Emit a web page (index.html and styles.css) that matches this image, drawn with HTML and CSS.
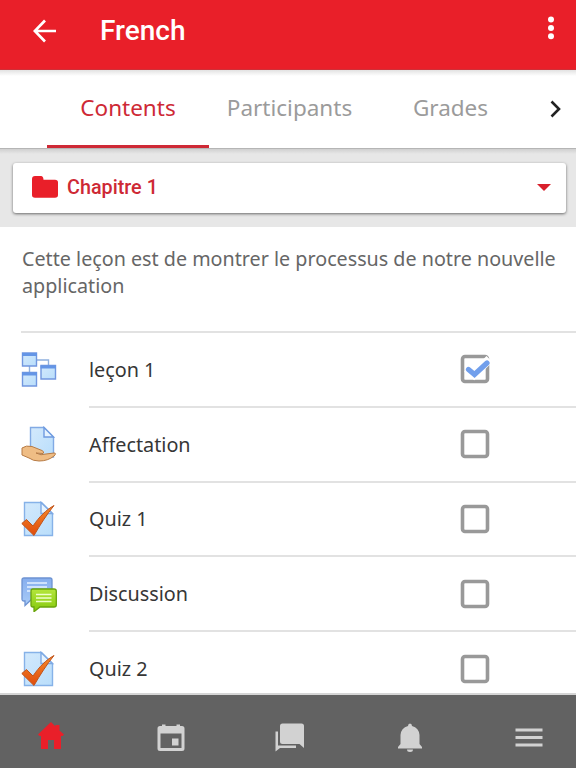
FILE: index.html
```html
<!DOCTYPE html>
<html lang="fr">
<head>
    <meta charset="UTF-8">
    <meta name="viewport" content="width=device-width, initial-scale=1.0">
    <title>French</title>
    <link rel="stylesheet" href="styles.css">
</head>
<body>
    <!-- Shared gradients and activity icons -->
    <svg class="defs" width="0" height="0">
        <defs>
            <linearGradient id="paper" x1="0" y1="0" x2="1" y2="1">
                <stop offset="0" stop-color="#d3e9fc"/>
                <stop offset="1" stop-color="#b9defb"/>
            </linearGradient>
            <linearGradient id="tick" x1="0" y1="0" x2="0" y2="1">
                <stop offset="0" stop-color="#f58a2c"/>
                <stop offset="1" stop-color="#e04c0c"/>
            </linearGradient>
            <linearGradient id="green" x1="0" y1="0" x2="0" y2="1">
                <stop offset="0" stop-color="#b4e63c"/>
                <stop offset="1" stop-color="#84c80c"/>
            </linearGradient>
            <linearGradient id="blue" x1="0" y1="0" x2="0" y2="1">
                <stop offset="0" stop-color="#86aeee"/>
                <stop offset="1" stop-color="#a9ccf8"/>
            </linearGradient>
        </defs>
        <symbol id="quiz" viewBox="0 0 36 36">
            <path d="M3.5 1.5H20.500L31.500 12.500V34.500H3.500Z" fill="url(#paper)" stroke="#86b2e8" stroke-width="1.400"/>
            <path d="M20 1.500V12.500H31.500Z" fill="#e6f3fe" stroke="#7da9e4" stroke-width="1.400"/>
            <path d="M.8 22.500L5.500 18.500L12 25C18 16 25 9 33 4.500C26 13 19 24 13 34.500Z" fill="url(#tick)" stroke="#c0541c"/>
        </symbol>
        <symbol id="empty" viewBox="0 0 30 30">
            <rect x="2.500" y="2.500" width="25" height="25" rx="2.500" fill="#fff" stroke="#999" stroke-width="3.600"/>
        </symbol>
    </svg>

    <header class="header">
        <svg class="back" width="24" height="24" viewBox="0 0 24 24"><path d="M23 12H2M12 1.500L1.800 12L12 22.500" fill="none" stroke="#fff" stroke-width="2.700"/></svg>
        <h1 class="title">French</h1>
        <svg class="more" width="8" height="26" viewBox="0 0 8 26" fill="#fff"><circle cx="4" cy="4.500" r="3"/><circle cx="4" cy="13" r="3"/><circle cx="4" cy="21.300" r="3"/></svg>
    </header>

    <nav class="tabs">
        <a class="tab active">Contents</a>
        <a class="tab">Participants</a>
        <a class="tab">Grades</a>
        <svg class="next" width="12" height="18" viewBox="0 0 12 18"><path d="M1.500 1.500L9 9L1.500 16.500" fill="none" stroke="#222" stroke-width="2.600"/></svg>
    </nav>

    <div class="chapter-bar">
        <div class="chapter">
            <svg width="26" height="22" viewBox="0 0 26 22"><path d="M3 0H9Q11.300 0 11.500 3.700H23Q26 3.700 26 6.500V19Q26 21.700 23 21.700H3Q0 21.700 0 19V3Q0 0 3 0Z" fill="#e91f29"/></svg>
            <span class="chapter-name">Chapitre 1</span>
            <span class="caret"></span>
        </div>
    </div>

    <main class="content">
        <p class="summary">Cette leçon est de montrer le processus de notre nouvelle application</p>
        <ul class="list">
            <li class="item">
                <svg class="icon" viewBox="0 0 36 36">
                    <path d="M16 9H27.500V15M8.500 14V21" fill="none" stroke="#8fb0de" stroke-width="1.400"/>
                    <g fill="url(#paper)" stroke="#7197df" stroke-width="1.400">
                        <path d="M1.500 2H15.500V15H1.500Z"/><path d="M20 14.500H34.500V28H20Z"/><path d="M1.500 21.500H15.500V35H1.500Z"/>
                    </g>
                    <path d="M1 3.500H16M19.500 16H35M1 23H16" stroke="#6495e6" stroke-width="3"/>
                </svg>
                <div class="row"><span>leçon 1</span>
                    <svg class="box" viewBox="0 0 30 30"><use href="#empty"/><path d="M7 14.500L14 20.500L29.500 5" fill="none" stroke="#fff" stroke-width="8.500"/><path d="M8.500 15.500L14.500 20.500L27 9" fill="none" stroke="#719fec" stroke-width="5.200" stroke-linecap="round"/></svg>
                </div>
            </li>
            <li class="item">
                <svg class="icon" viewBox="0 0 36 36">
                    <path d="M9.500 1.500H23L32.500 11V31H9.500Z" fill="url(#paper)" stroke="#82aae4" stroke-width="1.400"/>
                    <path d="M23 1.500V11H32.500Z" fill="#e6f3fe" stroke="#6f9be0" stroke-width="1.400"/>
                    <path d="M1 22Q5 19 11 20.500L21 24.500Q24 26 22 27.500L15 27Q20 30 25 28L33 27Q36 27 33 30Q27 35 18 35Q12 35 8 32L1 29Z" fill="#efbd85" stroke="#b77b45"/>
                </svg>
                <div class="row"><span>Affectation</span><svg class="box"><use href="#empty"/></svg></div>
            </li>
            <li class="item">
                <svg class="icon"><use href="#quiz"/></svg>
                <div class="row"><span>Quiz 1</span><svg class="box"><use href="#empty"/></svg></div>
            </li>
            <li class="item">
                <svg class="icon" viewBox="0 0 36 36">
                    <path d="M3 2H29Q31 2 31 4V21Q31 23 29 23H11L4 29.500V25H3Q1 25 1 23V4Q1 2 3 2Z" fill="url(#blue)" stroke="#6d93d2" stroke-width="1.300"/>
                    <path d="M6 7H26M6 11H26M6 15H20" stroke="#e5f1ff" stroke-width="1.700"/>
                    <path d="M12 13H33Q35.300 13 35.300 15V29Q35.300 31 33 31H19L13 35.700V31H12Q10 31 10 29V15Q10 13 12 13Z" fill="url(#green)" stroke="#69a40b" stroke-width="1.300"/>
                    <path d="M15 18.500H30.500M15 22H30.500M15 25.500H30.500" stroke="#efffcc" stroke-width="1.700"/>
                </svg>
                <div class="row"><span>Discussion</span><svg class="box"><use href="#empty"/></svg></div>
            </li>
            <li class="item">
                <svg class="icon"><use href="#quiz"/></svg>
                <div class="row"><span>Quiz 2</span><svg class="box"><use href="#empty"/></svg></div>
            </li>
        </ul>
    </main>

    <footer class="navbar">
        <svg class="home" viewBox="0 0 30 30"><path d="M15 1L19.500 5.500V4H23.500V9.500L28 13.500L26.500 15H25V28H18V19H12V28H5V15H3.500L2 13.500Z"/></svg>
        <svg viewBox="0 0 30 30"><path fill-rule="evenodd" d="M6 3V1.500H9.500V3H20.500V1.500H24V3H26Q28.500 3 28.500 5.500V25.500Q28.500 28 26 28H4Q1.500 28 1.500 25.500V5.500Q1.500 3 4 3ZM4.500 10.500V25H25.500V10.500ZM16 15.500H22.500V22.500H16Z"/></svg>
        <svg viewBox="0 0 30 30"><path d="M7.500 .5H26.500Q29 .5 29 3V25L24.500 21H7.500Q5 21 5 18.500V3Q5 .5 7.500 .5ZM.5 8.500H3V22.500H21V25H5L.5 28.500Z"/></svg>
        <svg viewBox="0 0 30 30"><path d="M15 .5Q17 .5 17 3Q24 5 24.500 12V21L27 24V25.500H3V24L5.500 21V12Q6 5 13 3Q13 .5 15 .5ZM12 26.500H18Q18 29 15 29Q12 29 12 26.500Z"/></svg>
        <svg viewBox="0 0 30 30"><path d="M1.500 5.500H28.500V8.500H1.500ZM1.500 13H28.500V16H1.500ZM1.500 20.500H28.500V23.500H1.500Z"/></svg>
    </footer>
</body>
</html>
```
FILE: styles.css
```css
* {
    box-sizing: border-box;
}

body {
    margin: 0;
    height: 768px;
    display: flex;
    flex-direction: column;
    overflow: hidden;
    background-color: #fff;
    color: #363636;
    font-family: "Noto Sans", sans-serif;
}

svg {
    flex-shrink: 0;
    display: block;
}

.defs {
    position: absolute;
}

.header {
    height: 70px;
    flex-shrink: 0;
    display: flex;
    align-items: center;
    padding: 0 21px 8px 33px;
    background-color: #e91f29;
    border-bottom: 1px solid #cf3038;
    color: #fff;
}

.title {
    flex: 1;
    margin: 0 0 0 43px;
    font-family: Roboto, sans-serif;
    font-size: 28px;
    font-weight: 500;
}

.more {
    margin-bottom: 5px;
}

.tabs {
    height: 79px;
    flex-shrink: 0;
    display: flex;
    align-items: center;
    padding-left: 47px;
    background: linear-gradient(#e2e2e2, #fff 6px);
    border-bottom: 1px solid #b5b5b5;
    font-size: 22.500px;
}

.tab {
    width: 161px;
    height: 78px;
    line-height: 75px;
    text-align: center;
    color: #9b9b9b;
}

.tab.active {
    width: 162px;
    color: #ce2935;
    border-bottom: 3px solid #ce2935;
}

.next {
    margin: 0 0 1px 19px;
}

.chapter-bar {
    height: 78px;
    flex-shrink: 0;
    padding: 14px 10px 0 13px;
    background: linear-gradient(#d0d0d0, #e7e7e7 5px);
}

.chapter {
    height: 50px;
    display: flex;
    align-items: center;
    padding: 0 15px 2px 19px;
    background-color: #fff;
    border-radius: 3px;
    box-shadow: 0 1px 3px rgba(0, 0, 0, .55);
}

.chapter-name {
    flex: 1;
    margin-left: 9px;
    color: #ce2935;
    font-family: Roboto, sans-serif;
    font-size: 19.800px;
    font-weight: 500;
}

.caret {
    border: 7px solid transparent;
    border-top-color: #d8202c;
    border-bottom: 0;
}

.content {
    flex: 1;
    overflow: hidden;
}

.summary {
    height: 104px;
    margin: 0;
    padding: 18px 0 0 22px;
    color: #666;
    font-size: 19.730px;
    line-height: 27px;
}

.list {
    margin: 0 0 0 21px;
    padding: 0;
    list-style: none;
    border-top: 2px solid #e2e2e2;
}

.item {
    height: 74.800px;
    display: flex;
    align-items: center;
}

.icon {
    width: 36px;
    height: 36px;
    margin-bottom: 2px;
}

.row {
    flex: 1;
    height: 100%;
    display: flex;
    align-items: center;
    justify-content: space-between;
    margin-left: 32px;
    padding-right: 86px;
    border-bottom: 2px solid #e2e2e2;
    font-size: 19.800px;
}

.box {
    width: 30px;
    height: 30px;
}

.navbar {
    height: 75px;
    flex-shrink: 0;
    display: flex;
    align-items: center;
    justify-content: space-between;
    padding: 12px 32px 0 36px;
    background-color: #626262;
    border-top: 2px solid #d5d5d5;
}

.navbar svg {
    width: 30px;
    height: 30px;
    fill: #d2d2d2;
}

.navbar .home {
    margin-bottom: 3px;
    fill: #e91f29;
}
```
